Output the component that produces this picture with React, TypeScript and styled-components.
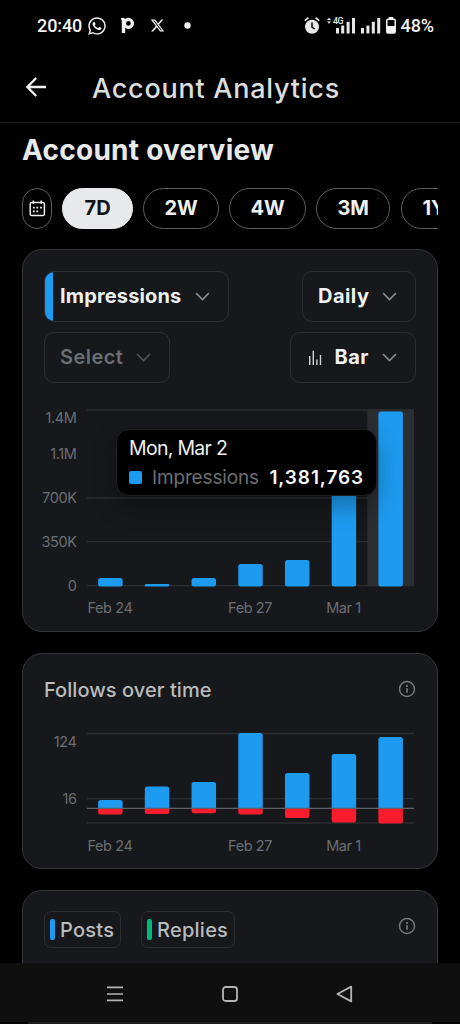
import React from 'react';
import styled, { createGlobalStyle } from 'styled-components';
import { FaWhatsapp } from 'react-icons/fa';
import { FaXTwitter } from 'react-icons/fa6';

const BLUE = '#1d9bf0';
const RED = '#f91c2d';
const GREEN = '#00ba7c';
const LINE = '#2b2d31';

const GlobalStyle = createGlobalStyle`
  * { box-sizing: border-box; }
  body {
    margin: 0;
    background: #000;
    font-family: Inter, "Liberation Sans", sans-serif;
    color: #e7e9ea;
  }
  svg { display: block; flex: none; overflow: visible; }
`;

const Screen = styled.div`
  display: flex;
  flex-direction: column;
  width: 460px;
  height: 1024px;
  overflow: hidden;
  background: #000;
`;

/* ---------- status bar ---------- */

const StatusBar = styled.div`
  display: flex;
  align-items: center;
  height: 51px;
  flex: none;
  padding: 0 26px 0 37px;
  font-family: Roboto, sans-serif;
  font-size: 18px;
  font-weight: 500;
  color: #f2f2f2;
`;

const StatusGroup = styled.div<{ $end?: boolean }>`
  display: flex;
  align-items: center;
  margin-left: ${(p) => (p.$end ? 'auto' : '0')};
`;

const StatusText = styled.span<{ $spacing?: string }>`
  letter-spacing: ${(p) => p.$spacing ?? '0'};
  line-height: 20px;
`;

const Slot = styled.span<{ $gap: number }>`
  display: flex;
  margin-left: ${(p) => p.$gap}px;
`;

/* ---------- header ---------- */

const Header = styled.header`
  display: flex;
  align-items: center;
  height: 72px;
  flex: none;
  padding: 1px 25px 0;
  border-bottom: 1px solid #1f2123;
`;

const HeaderTitle = styled.h1`
  margin: 4px 0 0 46px;
  font-size: 27px;
  font-weight: 500;
  line-height: 34px;
  letter-spacing: 0.76px;
  color: #dcdddd;
`;

/* ---------- content ---------- */

const Content = styled.main`
  flex: 1;
  min-height: 0;
  overflow: hidden;
  padding: 0 22px;
`;

const Heading = styled.h2`
  margin: 0 0 11px;
  font-size: 28px;
  font-weight: 700;
  line-height: 54px;
  letter-spacing: 0.25px;
  white-space: nowrap;
  color: #e7e9ea;
`;

const RangeRow = styled.div`
  display: flex;
  gap: 10.4px;
  overflow: hidden;
  margin-bottom: 20px;
`;

const RangeChip = styled.button<{ $width: number; $active?: boolean }>`
  display: flex;
  align-items: center;
  justify-content: center;
  flex: none;
  width: ${(p) => p.$width}px;
  height: 41px;
  padding: 0 0 1px;
  border: 1.5px solid ${(p) => (p.$active ? '#e7e9ea' : '#5c5e60')};
  border-radius: 21px;
  background: ${(p) => (p.$active ? '#e7e9ea' : '#000')};
  color: ${(p) => (p.$active ? '#0f1419' : '#eff0f1')};
  font-family: inherit;
  font-size: 20px;
  font-weight: 700;
`;

const Card = styled.section<{ $height: number }>`
  display: flex;
  flex-direction: column;
  height: ${(p) => p.$height}px;
  margin-bottom: 21.5px;
  padding: 21px 21px 0;
  border: 1px solid #34363a;
  border-radius: 20px;
  background: #16181c;
`;

const Controls = styled.div`
  display: flex;
  flex-direction: column;
  gap: 10px;
`;

const ControlRow = styled.div`
  display: flex;
  justify-content: space-between;
`;

const SelectBox = styled.button<{ $width: number; $accent?: boolean; $muted?: boolean }>`
  display: flex;
  align-items: center;
  width: ${(p) => p.$width}px;
  height: 51px;
  padding: 0 18px 0 ${(p) => (p.$accent ? 0 : 15)}px;
  border: 1px solid #2c2e32;
  border-radius: 10px;
  overflow: hidden;
  background: transparent;
  color: ${(p) => (p.$muted ? '#6b6e72' : '#eff0f1')};
  font-family: inherit;
  font-size: 20px;
  font-weight: ${(p) => (p.$muted ? 600 : 700)};
`;

const Accent = styled.span`
  align-self: stretch;
  width: 8px;
  margin-right: 7px;
  background: ${BLUE};
`;

const SelectLabel = styled.span<{ $spacing?: string }>`
  margin: 0 auto 1px 0;
  letter-spacing: ${(p) => p.$spacing ?? '0.15px'};
`;

const ChartArea = styled.div<{ $top: number }>`
  position: relative;
  margin-top: ${(p) => p.$top}px;
`;

const Tooltip = styled.div`
  position: absolute;
  top: 29px;
  left: 71.5px;
  display: flex;
  flex-direction: column;
  justify-content: center;
  width: 261px;
  height: 67px;
  padding: 0 13px 0 12.5px;
  border-radius: 13px;
  border: 1px solid #1c1d20;
  background: #000;
  box-shadow: 0 10px 24px rgba(0, 0, 0, 0.3);
  font-size: 19px;
  line-height: 29px;
  white-space: nowrap;
`;

const TooltipDate = styled.div`
  font-weight: 400;
  letter-spacing: -0.7px;
  font-size: 19.5px;
  color: #eff0f1;
`;

const TooltipRow = styled.div`
  display: flex;
  align-items: center;
`;

const Swatch = styled.span`
  width: 13px;
  height: 13px;
  margin-right: 10px;
  border-radius: 2px;
  background: ${BLUE};
`;

const TooltipName = styled.span`
  letter-spacing: -0.15px;
  color: #6b6e72;
`;

const TooltipValue = styled.span`
  margin: 0 -1.5px 0 auto;
  letter-spacing: 0.9px;
  font-weight: 600;
  color: #f7f9f9;
`;

const CardHead = styled.div`
  display: flex;
  justify-content: space-between;
  align-items: center;
  height: 27px;
`;

const CardTitle = styled.h3`
  margin: 3px 0 0;
  font-size: 20px;
  font-weight: 500;
  letter-spacing: 0.05px;
  color: #b9bbbd;
`;

const TagGroup = styled.div`
  display: flex;
  gap: 20px;
  margin-top: 8px;
`;

const Tag = styled.span<{ $width: number }>`
  display: flex;
  align-items: center;
  gap: 5px;
  width: ${(p) => p.$width}px;
  height: 37px;
  padding-left: 5px;
  border: 1px solid #2c2e32;
  border-radius: 7px;
  font-size: 20px;
  font-weight: 500;
  letter-spacing: 0.25px;
  color: #b9bbbd;
`;

const TagMark = styled.span<{ $color: string }>`
  width: 5px;
  height: 21px;
  border-radius: 2px;
  background: ${(p) => p.$color};
`;

const AxisText = styled.text`
  font-family: Inter, "Liberation Sans", sans-serif;
  font-size: 14.5px;
  letter-spacing: -0.4px;
  fill: #6b6e72;
`;

/* ---------- navigation bar ---------- */

const NavBar = styled.nav`
  display: flex;
  align-items: center;
  justify-content: space-between;
  flex: none;
  height: 59px;
  padding: 2px 107px 0;
  background: #0f0f0f;
`;

const NavEdge = styled.div`
  flex: none;
  height: 2px;
  margin: 0 28px;
  background: #1d1e20;
`;

/* ---------- icons ---------- */

const Chevron = ({ color = '#8b8e92' }: { color?: string }) => (
  <svg width="15" height="9" viewBox="0 0 15 9" fill="none" stroke={color} strokeWidth="1.6">
    <path d="M1 1l6.5 6.5L14 1" />
  </svg>
);

const InfoIcon = () => (
  <svg width="18" height="18" viewBox="0 0 18 18" fill="none" stroke="#75787b">
    <circle cx="9" cy="9" r="7.5" strokeWidth="1.5" />
    <path d="M9 8.2v4.6M9 5.1v1.8" strokeWidth="1.7" />
  </svg>
);

const BackIcon = () => (
  <svg width="21" height="20" viewBox="0 0 21 20" fill="none" stroke="#eff0f1" strokeWidth="2.4">
    <path d="M11.2 1L2.4 10l8.8 9M2.4 10H21" />
  </svg>
);

const CalendarIcon = () => (
  <svg width="17" height="17" viewBox="0 0 17 17" fill="none" stroke="#eff0f1" strokeWidth="1.5">
    <rect x="1.2" y="2.6" width="14.2" height="13" rx="1.6" />
    <path d="M4.4 .6v3.2M12.2 .6v3.2" />
    <path d="M7.4 7.6h1.8M11 7.6h1.8M3.9 7.6h1.8M3.9 11.4h1.8M7.4 11.4h1.8" strokeWidth="1.8" />
  </svg>
);

const BarsIcon = () => (
  <svg width="14" height="15" viewBox="0 0 14 15" fill="none" stroke="#cfd1d3" strokeWidth="1.4">
    <path d="M1.7 6v9M5.3 .8V15M8.9 9.5V15M12.5 5v10" />
  </svg>
);

const PayIcon = () => (
  <svg width="13" height="17" viewBox="0 0 13 17" fill="none" stroke="#f2f2f2">
    <path d="M2.5 1.5v14.5" strokeWidth="3.4" />
    <path d="M0 1.8h3" strokeWidth="1.8" />
    <circle cx="7.4" cy="6.4" r="4" strokeWidth="3.2" />
  </svg>
);

const AlarmIcon = () => (
  <svg width="16" height="17" viewBox="0 0 16 17" fill="none">
    <circle cx="8" cy="9.7" r="7" fill="#e8e8e8" />
    <path d="M.7 3.6L4.4 .8M15.3 3.6L11.6 .8" stroke="#e8e8e8" strokeWidth="1.7" />
    <path d="M8 5.6v4.4l2.7 2" stroke="#000" strokeWidth="1.5" />
  </svg>
);

const NetworkIcon = () => (
  <svg width="29" height="17" viewBox="0 0 29 17" fill="#e8e8e8">
    <path d="M0 3L2 .7 4 3zM0 4.4L2 6.7 4 4.4z" />
    <text x="6" y="7.4" fontFamily="Roboto, sans-serif" fontWeight="500" fontSize="8.8" letterSpacing="-0.6">
      4G
    </text>
    <rect x="9" y="11" width="3" height="5.5" />
    <rect x="14.2" y="8.6" width="3" height="7.9" />
    <rect x="19.6" y="4.8" width="3" height="11.7" />
    <rect x="25" y="1" width="3" height="15.5" />
  </svg>
);

const SignalIcon = () => (
  <svg width="20" height="17" viewBox="0 0 20 17" fill="#e8e8e8">
    <rect x="0" y="11" width="3" height="5.5" />
    <rect x="5.4" y="8.6" width="3" height="7.9" />
    <rect x="10.8" y="4.8" width="3" height="11.7" />
    <rect x="16.2" y="1" width="3" height="15.5" />
  </svg>
);

const BatteryIcon = () => (
  <svg width="10" height="17" viewBox="0 0 10 17" fill="none">
    <rect x="2.8" y="0" width="4.4" height="2" fill="#f2f2f2" />
    <rect x="0.8" y="2.3" width="8.4" height="13.7" rx="1.2" stroke="#f2f2f2" strokeWidth="1.5" />
    <rect x="1" y="9" width="8" height="7" fill="#f2f2f2" />
  </svg>
);

const MenuIcon = () => (
  <svg width="16" height="16" viewBox="0 0 16 16" stroke="#b4b4b4" strokeWidth="1.7">
    <path d="M0 1.4h16M0 8h16M0 14.4h16" />
  </svg>
);

const HomeIcon = () => (
  <svg width="16" height="16" viewBox="0 0 16 16" fill="none" stroke="#b4b4b4" strokeWidth="1.8">
    <rect x="1" y="1" width="14" height="14" rx="2.6" />
  </svg>
);

const TriangleIcon = () => (
  <svg width="17" height="18" viewBox="0 0 17 18" fill="none" stroke="#b4b4b4" strokeWidth="1.8" strokeLinejoin="round">
    <path d="M15.2 1.6v14.8L1.4 9z" />
  </svg>
);

/* ---------- charts ---------- */

const PLOT_LEFT = 43;
const PLOT_RIGHT = 370;
const STEP = (PLOT_RIGHT - PLOT_LEFT) / 7;
const BAR = 24.5;

const center = (i: number) => PLOT_LEFT + STEP * (i + 0.5);

type Label = { text: string; y: number };

const YAxis = ({ labels }: { labels: Label[] }) => (
  <>
    {labels.map((l) => (
      <AxisText key={l.text} x={32.5} y={l.y + 5.2} textAnchor="end">
        {l.text}
      </AxisText>
    ))}
  </>
);

const XAxis = ({ y }: { y: number }) => (
  <>
    {[
      ['Feb 24', 0],
      ['Feb 27', 3],
      ['Mar 1', 5],
    ].map(([text, i]) => (
      <AxisText key={text} x={center(i as number) - 0.4} y={y} textAnchor="middle">
        {text}
      </AxisText>
    ))}
  </>
);

const GridLines = ({ at }: { at: number[] }) => (
  <>
    {at.map((y) => (
      <path key={y} d={`M${PLOT_LEFT} ${y}H${PLOT_RIGHT}`} stroke={LINE} strokeWidth="1.3" />
    ))}
  </>
);

const impressionTops = [178, 184, 178, 164, 160, 80, 11.5];

const ImpressionsChart = () => (
  <svg width="372" height="220" viewBox="0 0 372 220">
    <GridLines at={[10, 98, 141.7, 185.7]} />
    <rect x={center(6) - STEP / 2} y="9.5" width={STEP} height="176.5" fill="#2b2e31" />
    {impressionTops.map((top, i) => (
      <rect key={i} x={center(i) - BAR / 2} y={top} width={BAR} height={186.4 - top} rx={Math.min(2.5, (186.4 - top) / 2)} fill={BLUE} />
    ))}
    <YAxis
      labels={[
        { text: '1.4M', y: 18 },
        { text: '1.1M', y: 54 },
        { text: '700K', y: 98 },
        { text: '350K', y: 141.5 },
        { text: '0', y: 185.5 },
      ]}
    />
    <XAxis y={213.3} />
  </svg>
);

const follows = [
  [80, 94.5],
  [66.5, 94],
  [62, 93.3],
  [13, 94.5],
  [53, 98],
  [34, 102.5],
  [17, 103.5],
];

const ZERO = 88.3;

const FollowsChart = () => (
  <svg width="372" height="140" viewBox="0 0 372 140">
    <GridLines at={[13.5, 78.7, 103]} />
    {follows.map(([top, bottom], i) => {
      const x = center(i) - BAR / 2;
      const r = 2.5;
      return (
        <g key={i}>
          <path d={`M${x} ${ZERO}V${top + r}q0-${r} ${r}-${r}h${BAR - 2 * r}q${r} 0 ${r} ${r}V${ZERO}z`} fill={BLUE} />
          <path d={`M${x} ${ZERO}V${bottom - r}q0 ${r} ${r} ${r}h${BAR - 2 * r}q${r} 0 ${r}-${r}V${ZERO}z`} fill={RED} />
        </g>
      );
    })}
    <path d={`M${PLOT_LEFT} ${ZERO}H${PLOT_RIGHT}`} stroke="#5d6064" strokeWidth="1.2" />
    <YAxis
      labels={[
        { text: '124', y: 21.5 },
        { text: '16', y: 79 },
      ]}
    />
    <XAxis y={131} />
  </svg>
);

export default function App() {
  return (
    <>
      <GlobalStyle />
      <Screen>
        <StatusBar>
          <StatusGroup>
            <StatusText $spacing="-0.1px">20:40</StatusText>
            <Slot $gap={4.5}><FaWhatsapp size={20} /></Slot>
            <Slot $gap={14}><PayIcon /></Slot>
            <Slot $gap={16.5}><FaXTwitter size={15} /></Slot>
            <Slot $gap={18.5}>
              <svg width="7" height="7" viewBox="0 0 7 7"><circle cx="3.5" cy="3.5" r="3.2" fill="#f2f2f2" /></svg>
            </Slot>
          </StatusGroup>
          <StatusGroup $end>
            <AlarmIcon />
            <Slot $gap={6.5}><NetworkIcon /></Slot>
            <Slot $gap={5}><SignalIcon /></Slot>
            <Slot $gap={5}><BatteryIcon /></Slot>
            <Slot $gap={5}><StatusText $spacing="-0.1px">48%</StatusText></Slot>
          </StatusGroup>
        </StatusBar>

        <Header>
          <BackIcon />
          <HeaderTitle>Account Analytics</HeaderTitle>
        </Header>

        <Content>
          <Heading>Account overview</Heading>
          <RangeRow>
            <RangeChip $width={30}><CalendarIcon /></RangeChip>
            <RangeChip $width={70.3} $active>7D</RangeChip>
            <RangeChip $width={76}>2W</RangeChip>
            <RangeChip $width={76.3}>4W</RangeChip>
            <RangeChip $width={74}>3M</RangeChip>
            <RangeChip $width={67}>1Y</RangeChip>
          </RangeRow>

          <Card $height={382.5}>
            <Controls>
              <ControlRow>
                <SelectBox $width={185} $accent>
                  <Accent />
                  <SelectLabel>Impressions</SelectLabel>
                  <Chevron />
                </SelectBox>
                <SelectBox $width={114}>
                  <SelectLabel $spacing="0.45px">Daily</SelectLabel>
                  <Chevron />
                </SelectBox>
              </ControlRow>
              <ControlRow>
                <SelectBox $width={126} $muted>
                  <SelectLabel $spacing="0.45px">Select</SelectLabel>
                  <Chevron color="#505357" />
                </SelectBox>
                <SelectBox $width={126}>
                  <Slot $gap={2}><BarsIcon /></Slot>
                  <Slot $gap={12.5} />
                  <SelectLabel $spacing="0.4px">Bar</SelectLabel>
                  <Chevron />
                </SelectBox>
              </ControlRow>
            </Controls>
            <ChartArea $top={17}>
              <ImpressionsChart />
              <Tooltip>
                <TooltipDate>Mon, Mar 2</TooltipDate>
                <TooltipRow>
                  <Swatch />
                  <TooltipName>Impressions</TooltipName>
                  <TooltipValue>1,381,763</TooltipValue>
                </TooltipRow>
              </Tooltip>
            </ChartArea>
          </Card>

          <Card $height={215.5}>
            <CardHead>
              <CardTitle>Follows over time</CardTitle>
              <InfoIcon />
            </CardHead>
            <ChartArea $top={18}>
              <FollowsChart />
            </ChartArea>
          </Card>

          <Card $height={160}>
            <CardHead>
              <TagGroup>
                <Tag $width={77}><TagMark $color={BLUE} />Posts</Tag>
                <Tag $width={94}><TagMark $color={GREEN} />Replies</Tag>
              </TagGroup>
              <InfoIcon />
            </CardHead>
          </Card>
        </Content>

        <NavBar>
          <MenuIcon />
          <HomeIcon />
          <TriangleIcon />
        </NavBar>
        <NavEdge />
      </Screen>
    </>
  );
}
